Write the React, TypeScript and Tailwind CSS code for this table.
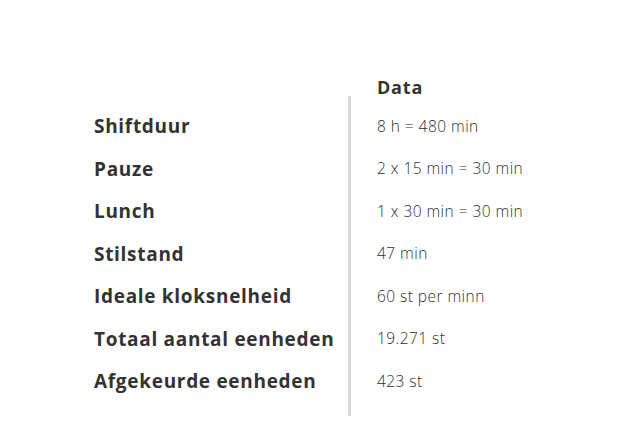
const rows: [string, string][] = [
  ["Shiftduur", "8 h = 480 min"],
  ["Pauze", "2 x 15 min = 30 min"],
  ["Lunch", "1 x 30 min = 30 min"],
  ["Stilstand", "47 min"],
  ["Ideale kloksnelheid", "60 st per minn"],
  ["Totaal aantal eenheden", "19.271 st"],
  ["Afgekeurde eenheden", "423 st"],
];

export default function App() {
  return (
    <div
      className="w-[636px] h-[424px] bg-white text-[#333]"
      style={{ fontFamily: '"Open Sans", "Liberation Sans", sans-serif' }}
    >
      <div className="pt-[76px] pl-[94px]">
        <div className="flex">
          <div className="w-[254px]" />
          <div className="pl-[29px] h-[20px] flex items-end text-[18px] leading-none font-bold tracking-[0.8px] text-[#333]">
            Data
          </div>
        </div>
        <div className="flex">
          <div className="w-[254px] pt-[9px]">
            {rows.map(([label]) => (
              <div key={label} className="h-[42.5px] flex items-center text-[19px] font-bold tracking-[0.7px]">
                {label}
              </div>
            ))}
          </div>
          <div className="border-l-[3px] border-[#dadada] pl-[26px] pt-[9px] pb-[13px]">
            {rows.map(([label, value]) => (
              <div key={label} className="h-[42.5px] flex items-center text-[15.5px] font-light tracking-[0.45px] text-[#2e2e2e]">
                {value}
              </div>
            ))}
          </div>
        </div>
      </div>
    </div>
  );
}
